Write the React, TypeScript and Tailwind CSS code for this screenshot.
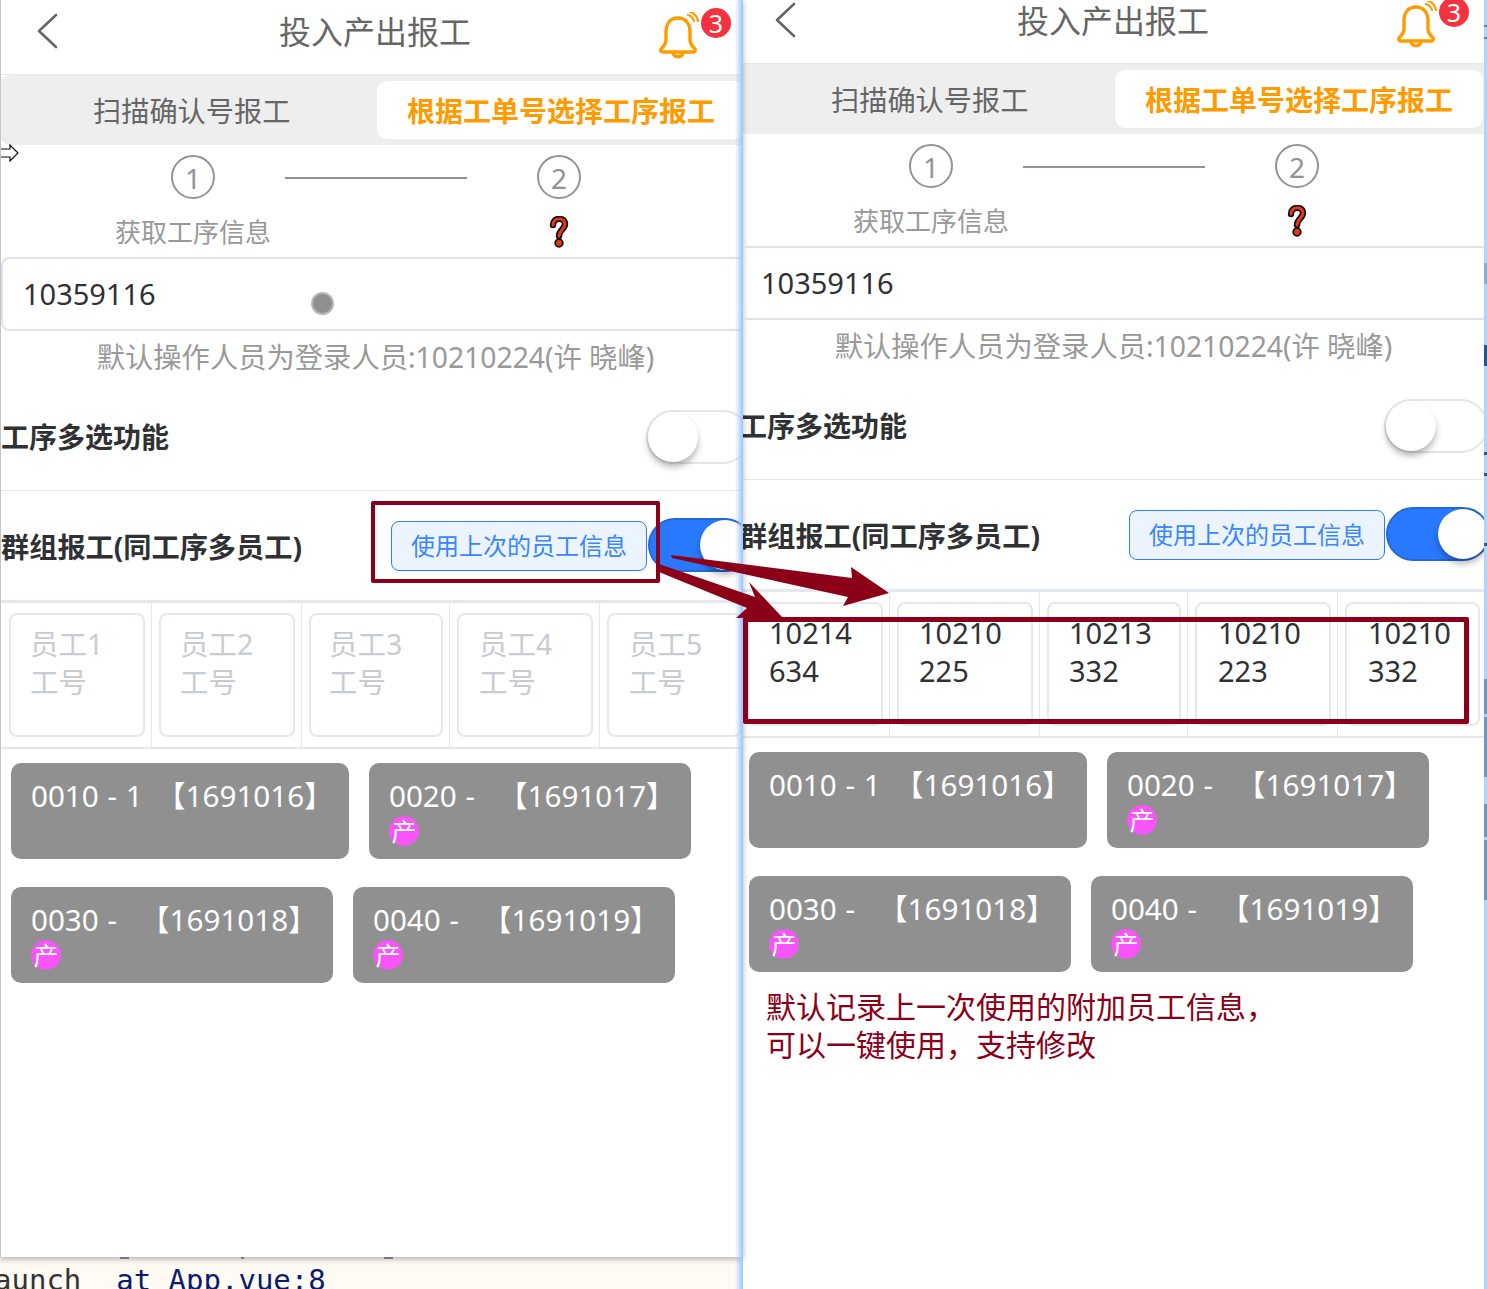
import React from "react";

const FONT = "font-['Noto_Sans','Noto_Sans_CJK_SC',sans-serif]";

function Bell() {
  return (
    <svg width="48" height="48" viewBox="0 0 48 48" fill="none" stroke="#ff9b00" strokeLinecap="round" strokeLinejoin="round">
      <path d="M21 6c-8 0-12 6-12 14v8c0 4-2 6-5 9-1 2 0 3 2 3h30c2 0 3-1 2-3-3-3-5-5-5-9v-8c0-8-4-14-12-14z" strokeWidth="3.4" />
      <path d="M16 41c1 5 9 5 10 0" strokeWidth="3.4" />
      <path d="M31 3c3 1 5 3 6 6" strokeWidth="2.2" />
      <path d="M33 0c4 1 7 4 8 9" strokeWidth="2.2" />
    </svg>
  );
}

function Question() {
  return (
    <svg width="22" height="32" viewBox="0 0 22 32" fill="none" strokeLinecap="round">
      <path d="M5 9c0-8 12-8 12-1 0 5-6 6-6 12" stroke="#111" strokeWidth="6.4" />
      <circle cx="11" cy="27" r="3.8" fill="#e8381c" stroke="#111" strokeWidth="1.8" />
      <path d="M5 9c0-8 12-8 12-1 0 5-6 6-6 12" stroke="#e8381c" strokeWidth="3" />
    </svg>
  );
}

function Toggle({ on }: { on: boolean }) {
  return (
    <div
      className={
        on
          ? "w-[104px] h-[54px] rounded-full bg-[#2979ff] border-2 border-[#2468d8] flex justify-end shrink-0"
          : "w-[104px] h-[54px] rounded-full bg-white border-2 border-[#e5e5e5] flex justify-start shrink-0"
      }
    >
      <div className="w-[50px] h-[50px] rounded-full bg-white shadow-[0_5px_6px_rgba(0,0,0,0.28)]" />
    </div>
  );
}

const CELLS = [
  { w: "w-[152px]", pad: "pl-[9px] pr-[6px] border-r border-[#e4e7ed]", ph: "", val: "ml-[1px]" },
  { w: "w-[150px]", pad: "pl-[7px] pr-[6px] border-r border-[#e4e7ed]", ph: "", val: "ml-[1px]" },
  { w: "w-[148px]", pad: "pl-[7px] pr-[6px] border-r border-[#e4e7ed]", ph: "-ml-[1px]", val: "ml-[1px]" },
  { w: "w-[150px]", pad: "pl-[7px] pr-[6px] border-r border-[#e4e7ed]", ph: "ml-[1px]", val: "ml-[2px]" },
  { w: "w-[147px]", pad: "pl-[7px] pr-[5px]", ph: "ml-[1px]", val: "ml-[2px]" },
];

function Card({ code, suffix, gap, w, badge }: { code: string; suffix: string; gap: string; w: string; badge: boolean }) {
  return (
    <div className={`${w} h-[96px] rounded-[10px] bg-[#909090] pl-[20px] pt-[13px] text-white`}>
      <div className="flex h-[40px] items-center text-[29.6px] leading-[40px] whitespace-nowrap">
        <span className={`${gap} [word-spacing:1px]`}>{code}</span>
        <span>{suffix}</span>
      </div>
      {badge && (
        <div className="w-[30px] h-[30px] rounded-full bg-[#f755f7] flex items-center justify-center text-[25px] leading-[30px]">
          产
        </div>
      )}
    </div>
  );
}

function Panel({ right }: { right: boolean }) {
  const values = [
    ["10214", "634"],
    ["10210", "225"],
    ["10213", "332"],
    ["10210", "223"],
    ["10210", "332"],
  ];
  return (
    <div className={`w-[747px] bg-white ${FONT}`}>
      <div className="h-[75px] flex items-center border-b border-[#e5e7eb]">
        <div className="w-[130px] pl-[36px] -mt-[12px]">
          <svg width="22" height="36" viewBox="0 0 22 36" fill="none" stroke="#666" strokeWidth="2.6" strokeLinecap="round" strokeLinejoin="round">
            <path d="M20 2 3 18l17 16" />
          </svg>
        </div>
        <div className="flex-1 text-center text-[32px] leading-[44px] text-[#666] -mt-[10px]">投入产出报工</div>
        <div className="w-[127px] pl-[37px] relative -mt-[2px]">
          <Bell />
          <div className="absolute left-[81px] -top-[4px] w-[30px] h-[30px] rounded-full bg-[#f5333f] text-white text-[25px] leading-[30px] text-center">3</div>
        </div>
      </div>

      <div className="h-[70px] bg-[#eeeeee] rounded-l-[10px] flex items-center">
        <div className="w-[377px] pl-[93px] pt-[2px] text-[28.2px] text-[#666] whitespace-nowrap">扫描确认号报工</div>
        <div className="w-[368px] h-[58px] pt-[2px] bg-white rounded-[10px] flex items-center justify-center text-[28px] font-bold text-[#ff9a00] whitespace-nowrap">
          根据工单号选择工序报工
        </div>
      </div>

      <div className="h-[112px] flex pl-[113px] gap-[12px] pt-[10px]">
        <div className="w-[160px] flex flex-col items-center">
          <div className="w-[44px] h-[44px] pt-[2px] rounded-full border-2 border-[#909399] flex items-center justify-center text-[#909399] text-[28px] leading-none">1</div>
          <div className="mt-[13px] text-[26px] leading-[40px] text-[#999] whitespace-nowrap">获取工序信息</div>
        </div>
        <div className="w-[182px] h-[2px] bg-[#909399] mt-[22px]" />
        <div className="w-[160px] flex flex-col items-center">
          <div className="w-[44px] h-[44px] pt-[2px] rounded-full border-2 border-[#909399] flex items-center justify-center text-[#909399] text-[28px] leading-none">2</div>
          <div className="mt-[17px]"><Question /></div>
        </div>
      </div>

      <div className="ml-[1px] -mr-[4px] h-[74px] border-2 border-[#dfe2ea] rounded-[8px] pl-[20px] flex items-center text-[29px] text-[#303133] relative">
        <span className="-mt-[1px]">10359116</span>
        {!right && <div className="absolute left-[308px] top-[33px] w-[23px] h-[23px] rounded-full bg-[#8f8f8f] border-2 border-[#b8b8b8]" />}
      </div>

      <div className="h-[60px] pl-[4px] text-center text-[28.3px] leading-[52px] text-[#999] whitespace-nowrap">默认操作人员为登录人员:10210224(许 晓峰)</div>

      <div className="h-[100px] border-b border-[#e5e7eb] flex items-center justify-between pb-[8px] pl-[1px]">
        <span className="text-[28px] font-bold text-[#303133]">工序多选功能</span>
        <div className="-mr-[3px]"><Toggle on={false} /></div>
      </div>

      <div className="h-[112px] border-b-[3px] border-[#e4e7ed] flex items-center pl-[1px]">
        <span className="w-[390px] shrink-0 pt-[3px] text-[28.2px] font-bold text-[#303133] whitespace-nowrap">群组报工(同工序多员工)</span>
        <div className="w-[256px] h-[50px] shrink-0 pt-[1px] rounded-[8px] border border-[#2b7cff] bg-[#ecf5ff] text-[#3a86ff] text-[24px] flex items-center justify-center whitespace-nowrap">
          使用上次的员工信息
        </div>
        <div className="-mt-[1px] ml-[1px]"><Toggle on={true} /></div>
      </div>

      <div className="h-[146px] border-b-2 border-[#e4e7ed] flex">
        {CELLS.map((c, i) => (
          <div key={i} className={`${c.w} ${c.pad} pt-[10px] shrink-0 flex`}>
            <div className="flex-1 h-[124px] rounded-[8px] border-2 border-[#e4e7ed] pl-[19px] pt-[10px]">
              {right ? (
                <div className={`${c.val} text-[29px] leading-[38px] text-[#303133]`}>
                  <div>{values[i][0]}</div>
                  <div>{values[i][1]}</div>
                </div>
              ) : (
                <div className={`${c.ph} text-[28.5px] leading-[38px] text-[#c8cbd2] whitespace-nowrap`}>
                  <div>{`员工${i + 1}`}</div>
                  <div>工号</div>
                </div>
              )}
            </div>
          </div>
        ))}
      </div>

      <div className="pt-[14px] px-[11px] flex flex-wrap gap-x-[20px] gap-y-[28px]">
        <Card code="0010 - 1" suffix="【1691016】" gap="w-[125px]" w="w-[338px]" badge={false} />
        <Card code="0020 -" suffix="【1691017】" gap="w-[109px]" w="w-[322px]" badge={true} />
        <Card code="0030 -" suffix="【1691018】" gap="w-[109px]" w="w-[322px]" badge={true} />
        <Card code="0040 -" suffix="【1691019】" gap="w-[109px]" w="w-[322px]" badge={true} />
      </div>

      {right ? (
        <div className="pl-[29px] pt-[16px] h-[306px] text-[30px] leading-[38px] text-[#8b0018] whitespace-nowrap">
          <div className="-ml-[1px]">默认记录上一次使用的附加员工信息，</div>
          <div className="-ml-[1px]">可以一键使用，支持修改</div>
        </div>
      ) : (
        <div className="h-[274px]" />
      )}
    </div>
  );
}

const STRIP = [
  { h: "h-[25px]", c: "bg-[#b7d3f5]" },
  { h: "h-[2px]", c: "bg-[#5f7fb0]" },
  { h: "h-[10px]", c: "bg-[#b7d3f5]" },
  { h: "h-[2px]", c: "bg-[#5f7fb0]" },
  { h: "h-[224px]", c: "bg-[#b7d3f5]" },
  { h: "h-[21px]", c: "bg-[#8fa9cf]" },
  { h: "h-[61px]", c: "bg-[#b7d3f5]" },
  { h: "h-[21px]", c: "bg-[#2f5588]" },
  { h: "h-[86px]", c: "bg-[#b7d3f5]" },
  { h: "h-[3px]", c: "bg-[#2f5588]" },
  { h: "h-[18px]", c: "bg-[#b7d3f5]" },
  { h: "h-[3px]", c: "bg-[#2f5588]" },
  { h: "h-[67px]", c: "bg-[#b7d3f5]" },
  { h: "h-[3px]", c: "bg-[#2f5588]" },
  { h: "h-[133px]", c: "bg-[#b7d3f5]" },
  { h: "h-[35px]", c: "bg-[#7a94b8]" },
  { h: "h-[3px]", c: "bg-[#b7d3f5]" },
  { h: "h-[60px]", c: "bg-[#7a94b8]" },
  { h: "h-[27px]", c: "bg-[#b7d3f5]" },
  { h: "h-[33px]", c: "bg-[#7a94b8]" },
  { h: "h-[3px]", c: "bg-[#b7d3f5]" },
  { h: "h-[60px]", c: "bg-[#7a94b8]" },
];

export default function App() {
  return (
    <div className="relative w-[1487px] h-[1289px] overflow-hidden flex bg-white">
      <div className="relative w-[743px] h-[1289px] shrink-0 flex flex-col bg-[#fdfbf3]">
        <div className="relative h-[1257px] overflow-hidden shrink-0 shadow-[0_2px_6px_rgba(0,0,0,0.3)] border-l border-[#c4c4c4] bg-white">
          <div className="-ml-[1px]"><Panel right={false} /></div>
          <svg className="absolute left-[0px] top-[144px]" width="18" height="18" viewBox="0 0 18 18" fill="#fff" stroke="#111" strokeWidth="1.2">
            <path d="M0 5h9V1l8 8-8 8v-4H0" />
          </svg>
        </div>
        <div className="relative pt-[7px] -ml-[6px] whitespace-pre font-['DejaVu_Sans_Mono',monospace] text-[29px] leading-[32px] text-[#0c1a6e]">
          <span className="text-[#333]">aunch</span>{"  "}at App.vue:8
        </div>
        <div className="absolute left-[120px] top-[1257px] w-[9px] h-[2px] bg-[#777]" />
        <div className="absolute left-[241px] top-[1257px] w-[3px] h-[2px] bg-[#777]" />
        <div className="absolute left-[384px] top-[1257px] w-[9px] h-[2px] bg-[#777]" />
        <div className="absolute right-0 top-0 bottom-0 w-[8px] bg-gradient-to-r from-transparent to-[#9cc4ff]" />
      </div>

      <div className="w-[741px] h-[1289px] shrink-0 overflow-hidden">
        <div className="-ml-[5px] -mt-[11px]"><Panel right={true} /></div>
      </div>

      <div className="w-[3px] h-full bg-[#b7d3f5] flex flex-col">
        {STRIP.map((s, i) => (
          <div key={i} className={`${s.h} ${s.c} shrink-0`} />
        ))}
      </div>

      <div className="absolute left-[371px] top-[501px] w-[289px] h-[82px] border-[4px] border-[#8b0018] rounded-[2px]" />
      <div className="absolute left-[743px] top-[617px] w-[726px] h-[107px] border-[5px] border-[#8b0018] rounded-[2px]" />
      <svg className="absolute left-0 top-0 pointer-events-none" width="1487" height="1289" fill="#8b0018">
        <polygon points="671,555 852,578 851,567 889,593 843,606 848,597 672,558" />
        <polygon points="659,564 755,597 749,582 782,617 736,618 747,608 659,572" />
      </svg>
    </div>
  );
}
